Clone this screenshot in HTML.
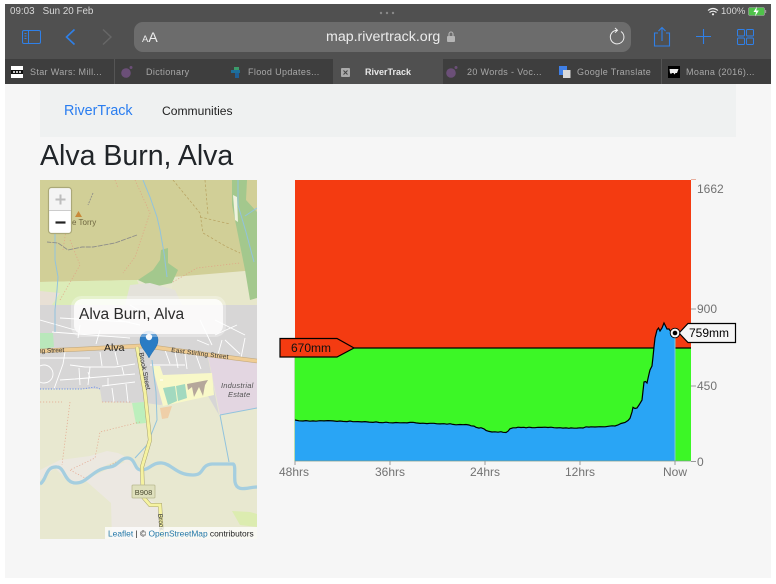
<!DOCTYPE html>
<html><head><meta charset="utf-8"><style>
html,body{margin:0;padding:0;width:776px;height:584px;overflow:hidden;background:#fff;font-family:"Liberation Sans",sans-serif}
.a{position:absolute;white-space:nowrap}
.tab{font-size:9px;color:#a8a8a8;letter-spacing:.35px;top:67px;line-height:11px}
</style></head><body>
<div class="a" style="left:5px;top:84px;width:766px;height:494px;background:#f6f6f6"></div>
<div class="a" style="left:5px;top:4px;width:766px;height:55px;background:#505050"></div>
<div class="a" style="left:5px;top:59px;width:766px;height:25px;background:#3e3e3e"></div>
<div class="a" style="left:333px;top:59px;width:110px;height:25px;background:#505050"></div>
<div class="a" style="left:114px;top:59px;width:1px;height:25px;background:#555"></div>
<div class="a" style="left:661px;top:59px;width:1px;height:25px;background:#555"></div>
<div class="a" style="left:10px;top:6px;font-size:9.8px;line-height:12px;color:#d8d8d8">09:03&nbsp;&nbsp;&nbsp;Sun 20 Feb</div>
<div class="a" style="left:721px;top:6px;font-size:9.5px;line-height:12px;color:#d8d8d8">100%</div>
<div class="a" style="left:134px;top:22px;width:497px;height:30px;border-radius:9px;background:#6c6c6c"></div>
<div class="a" style="left:142px;top:29px;font-size:14px;line-height:17px;color:#eee"><span style="font-size:9.500px">A</span>A</div>
<div class="a" style="left:326px;top:28px;font-size:14.200px;line-height:18px;color:#ececec">map.rivertrack.org</div>
<div class="a tab" style="left:30px">Star Wars: Mill...</div>
<div class="a tab" style="left:146px">Dictionary</div>
<div class="a tab" style="left:248px">Flood Updates...</div>
<div class="a tab" style="left:365px;color:#e8e8e8;font-weight:bold;letter-spacing:0">RiverTrack</div>
<div class="a tab" style="left:467px">20 Words - Voc...</div>
<div class="a tab" style="left:577px">Google Translate</div>
<div class="a tab" style="left:686px">Moana (2016)...</div>

<div class="a" style="left:40px;top:84px;width:696px;height:53px;background:#eff1f1"></div>
<div class="a" style="left:64px;top:102px;font-size:14.300px;line-height:18px;color:#2a7df0">RiverTrack</div>
<div class="a" style="left:162px;top:103px;font-size:12.100px;line-height:16px;color:#222">Communities</div>
<div class="a" style="left:40px;top:139px;font-size:28.500px;line-height:34px;color:#212529">Alva Burn, Alva</div>

<svg class="a" style="left:0;top:0" width="776" height="584" viewBox="0 0 776 584">
<defs><clipPath id="m"><rect x="40" y="180" width="217" height="359"/></clipPath></defs>
<!-- browser icons -->
<g fill="none" stroke="#2f80e8" stroke-width="1">
<rect x="22.500" y="30.500" width="18" height="13" rx="1.500"/><path d="M28.500 30.500v13M24.500 33.500h2M24.500 36h2M24.500 38.500h2"/>
<path d="M74.500 29.500l-8 7.500 8 7.500" stroke-width="1.600"/>
<path d="M658 33h-3.500v13h15V33H666M662 41V27.500M658.500 31L662 27.500l3.500 3.500" stroke-width="1.100"/>
<path d="M696 36.500h15M703.500 29v15" stroke-width="1.100"/>
<rect x="737.500" y="29.500" width="7" height="6.500" rx="1"/><rect x="746.500" y="29.500" width="7" height="6.500" rx="1"/><rect x="737.500" y="38" width="7" height="6.500" rx="1"/><rect x="746.500" y="38" width="7" height="6.500" rx="1"/>
</g>
<path d="M103 29.500l8 7.500-8 7.500" fill="none" stroke="#676767" stroke-width="1.400"/>
<path d="M621 31.500a6.800 6.800 0 1 1-4-1.200M615 28l2.500 2.300-2.500 2.400" fill="none" stroke="#eee" stroke-width="1"/>
<rect x="447" y="36" width="8" height="6" rx="1" fill="#b5b5b5"/><path d="M449 36v-2a2 2 0 0 1 4 0v2" fill="none" stroke="#b5b5b5" stroke-width="1.100"/>
<circle cx="381" cy="13" r="1.200" fill="#888"/><circle cx="387" cy="13" r="1.200" fill="#888"/><circle cx="393" cy="13" r="1.200" fill="#888"/>
<path d="M708 10.500q5-4 10 0M709.500 12.500q3.500-2.600 7 0" fill="none" stroke="#eee" stroke-width="1.100"/><circle cx="713" cy="14.300" r="1.100" fill="#eee"/>
<rect x="748.500" y="7.500" width="16" height="8" rx="1.500" fill="#4fc24a" stroke="#aaa" stroke-width=".6"/><rect x="765" y="10" width="1.200" height="3" fill="#999"/><path d="M757 6.500l-3.500 5.500h2.500l-1 4.500 3.800-6h-2.500z" fill="#fff"/>
<!-- favicons -->
<rect x="11" y="66" width="12" height="12" fill="#fff"/><rect x="11" y="70" width="12" height="4" fill="#111"/><path d="M13 71.300h2v1.500h-2zM16 71.300h2v1.500h-2zM19 71.300h2v1.500h-2z" fill="#fff"/>
<circle cx="126" cy="73" r="4.800" fill="#6b4f78"/><circle cx="131" cy="67.500" r="1.500" fill="#6b4f78"/>
<circle cx="451" cy="73" r="4.800" fill="#6b4f78"/><circle cx="456" cy="67.500" r="1.500" fill="#6b4f78"/>
<rect x="234" y="67" width="5" height="5" fill="#3b9a6a"/><rect x="231" y="70" width="9" height="3" fill="#1e6f9a"/><rect x="235" y="73" width="4" height="5" fill="#1f5f96"/>
<rect x="341" y="68" width="9" height="9" rx="1" fill="#aaa"/><path d="M343.500 70.500l4 4M347.500 70.500l-4 4" stroke="#444" stroke-width="1"/>
<rect x="559" y="66" width="8" height="9" fill="#3f7fe6"/><rect x="563" y="70" width="7.500" height="8" fill="#d8d8d8"/>
<rect x="668" y="66" width="12" height="12" fill="#000"/><path d="M669.500 69h9l-1.500 4h-1.500l-1 1.500-1-1.500h-1.500l-1 1-1-1z" fill="#eee"/>

<!-- map -->
<g clip-path="url(#m)">
<rect x="40" y="180" width="217" height="359" fill="#e8e8d0"/>
<path d="M40 180H257V273L247 273 173 277 137 280 40 282Z" fill="#d1cf97"/>
<path d="M40 282L137 280 145 300 140 305H40Z" fill="#dcecb8"/>
<path d="M40 291L60 293 52 305H40Z" fill="#e8e0d5"/>
<path d="M173 277L257 270V310H170Z" fill="#e7e7cb"/>
<path d="M232 180L247 180 246 200 257 212V298L250 300 245 270 238 235 232 205Z" fill="#a3c88d"/>
<path d="M233 195L237 197 238 222 235 220Z" fill="#eef2dd"/>
<path d="M161 250L168 248 168 263 178 270 172 283 153 287 138 280 153 270 160 260Z" fill="#a3c88d"/>
<path d="M130 285L150 283 175 290 182 305H125Z" fill="#e4e2da"/>
<path d="M40 305H257V361L208 358 219 415 208 396 160 405 146 403 102 402 100 389H40Z" fill="#d7d6d6"/>
<path d="M40 333L53 333 54 347 40 350Z" fill="#b9e8bb"/>
<path d="M208 356L257 361V408L220 415Z" fill="#e3d6e1"/>
<path d="M152 366L160 366 163 375 212 373 214 395 163 406Z" fill="#f8f8c8"/>
<path d="M163 388L175 386 177 401 168 405Z" fill="#a2d9bf"/><path d="M176 386L185 384 187 398 178 401Z" fill="#a2d9bf"/>
<path d="M187 384L208 380 205 385 203 396 199 387 194 397 192 387 188 390Z" fill="#b5a79b"/>
<path d="M132 403L144 402 146 423 136 424Z" fill="#bcefbc"/>
<path d="M160 408L172 406 168 418 162 419Z" fill="#efcfa8"/>
<path d="M107 451L118 453 130 459 138 470 120 459 100 468 85 479 72 485 55 468 40 480V470L60 460 90 456Z" fill="#ece8e0"/>
<path d="M143 470L143 497 160 505 162 539H112L111 503 85 480 110 468 125 462 138 470Z" fill="#ece8e2"/>
<path d="M232 511L250 512 257 514V527L240 525Z" fill="#dcecb0"/>
<!-- streets -->
<g fill="none" stroke="#fff" stroke-width=".9">
<path d="M40 358H90M65 352l-2 12-9 25M70 365l15 2 30 0 20-3M75 379L135 374M79 368l1 17M90 367l-2 18M100 352l2 14M115 352l3 13M108 378l0 8M60 380L90 378 88 372M122 367l2 8"/>
<path d="M102 386L135 382M112 388l2 14M126 384l2 18"/>
<path d="M165 350l5 14M175 352l3 16M185 354l2 15M196 355l5 14M150 365H185M160 380l3 0"/>
<path d="M215 320L245 335M215 335l22-10M225 340l15 14M245 338l-4 20M217 358l5-18M200 320l12 25M197 340l12 5"/>
<path d="M52 332L130 338M60 318L130 322M80 325l-2 13M100 330l-4 14M40 320L75 330M118 320l22 5M130 305l25 15"/>
</g>
<circle cx="44" cy="374" r="9" fill="none" stroke="#fff" stroke-width=".9"/>
<path d="M40 389H82L95 387 100 389" fill="none" stroke="#6a8ee8" stroke-width=".9" stroke-dasharray="1.200 1.500"/>
<!-- footpaths -->
<g fill="none" stroke="#e39a80" stroke-width=".7" stroke-dasharray="1.200 1.800" opacity=".85">
<path d="M135 180L150 213 135 257 123 273M173 282L197 268 240 263M60 300L80 265 70 240M63 250L72 190M70 402L62 465M102 402h30M140 422L100 432 95 458 70 470M40 402H62M70 470L85 478 120 460M115 180l3 8"/>
</g>
<g fill="none" stroke="#b7a05e" stroke-width=".7" stroke-dasharray="2.500 2"><path d="M173 180L200 213 203 233 227 247 240 253M200 217L230 224M205 180L208 215"/></g>
<!-- streams -->
<g fill="none" stroke="#92c3dd" stroke-width="1">
<path d="M143 180L150 197 157 217 160 230 164 253 167 277"/>
<path d="M55 233V260L58 277 57 290 55 310V332"/>
<path d="M238 180L238 205 246 232 254 262M257 208L245 216"/>
<path d="M152 360L156 392 157 420 147 445 135 458"/>
<path d="M220 415L257 408M220 415L229 462"/>
</g>
<path d="M40 484C47 480 45 466 57 467 65 467 64 483 76 483 88 483 92 469 110 467 118 466 120 458 127 458 136 458 134 470 141 470 150 470 152 462 162 463 172 464 176 475 193 475 205 475 200 465 212 464H233C236 465 234 474 235 482 237 493 248 487 257 487" fill="none" stroke="#a5cedf" stroke-width="3.300"/>
<!-- roads -->
<path d="M40 351L83 349 140 346 153 347 210 355 257 361" fill="none" stroke="#c4ab80" stroke-width="4.500"/>
<path d="M40 351L83 349 140 346 153 347 210 355 257 361" fill="none" stroke="#f0cd94" stroke-width="3.300"/>
<path d="M137 347L145 393 150 440 142 467 143 497 150 505 160 505 162 539" fill="none" stroke="#a5a070" stroke-width="4"/>
<path d="M137 347L145 393 150 440 142 467 143 497 150 505 160 505 162 539" fill="none" stroke="#f5f2a0" stroke-width="3"/>
<rect x="132" y="485" width="23" height="13" fill="#dfe0bd" stroke="#b8b88f" stroke-width=".8" rx="1"/>
<text x="143.500" y="495" font-size="7.500" text-anchor="middle" fill="#4a4a30" font-family="Liberation Sans">B908</text>
<text x="104" y="351" font-size="10.500" fill="#222" font-family="Liberation Sans">Alva</text>
<text x="171" y="352" font-size="6.500" fill="#333" font-family="Liberation Sans" transform="rotate(7 171 352)" letter-spacing=".2">East Stirling Street</text>
<text x="38" y="353" font-size="6.500" fill="#333" font-family="Liberation Sans" transform="rotate(-2 38 353)">ng Street</text>
<text x="221" y="388" font-size="7.500" fill="#555" font-family="Liberation Sans" font-style="italic" letter-spacing=".2">Industrial</text>
<text x="228" y="397" font-size="7.500" fill="#555" font-family="Liberation Sans" font-style="italic" letter-spacing=".2">Estate</text>
<text x="0" y="0" font-size="6.800" fill="#333" font-family="Liberation Sans" transform="translate(139 353) rotate(79)">Brook Street</text>
<text x="0" y="0" font-size="6.500" fill="#333" font-family="Liberation Sans" transform="translate(158 514) rotate(84)">Brook</text>
<text x="72" y="225" font-size="8" fill="#6e6640" font-family="Liberation Sans">e Torry</text>
<path d="M75 217l3.500-6 3.500 6z" fill="#c98a3a"/>
<path d="M137 235L115 243 93 247 82 247 68 250 58 243 47 242" fill="none" stroke="#8f8f8a" stroke-width=".9" stroke-dasharray="5 1"/>
<path d="M93 193L88 205" fill="none" stroke="#8f8f8a" stroke-width=".9" stroke-dasharray="2 1"/>
</g>
<!-- marker -->
<path d="M149 358C145 350 140 347 140 340a9 9 0 0 1 18 0C158 347 153 350 149 358Z" fill="#2a7cc4" stroke="#1f6bab" stroke-width=".5"/>
<circle cx="149" cy="337" r="3.200" fill="#fff" opacity=".95"/>
<!-- popup -->
<rect x="72.500" y="297.500" width="152" height="38" rx="9" fill="none" stroke="#fff" stroke-opacity=".3" stroke-width="3"/>
<rect x="74" y="299" width="149" height="35" rx="8" fill="#fff" fill-opacity=".86"/>
<text x="79" y="319" font-size="15.500" fill="#2b2b2b" font-family="Liberation Sans">Alva Burn, Alva</text>
<!-- zoom control -->
<rect x="48.500" y="187.500" width="23" height="46" rx="3" fill="#fff" stroke="#aaa878" stroke-width="1.200"/>
<rect x="49.500" y="188.500" width="21" height="22" rx="2" fill="#f4f4f4"/>
<path d="M49 210.500h22" stroke="#ccc"/>
<path d="M55.500 199.500h10M60.500 194.500v10" stroke="#bdbdbd" stroke-width="2"/>
<path d="M55.500 222.500h10" stroke="#222" stroke-width="2.200"/>
<rect x="105" y="527" width="152" height="12" fill="#fff" fill-opacity=".75"/>
<text x="108" y="536.500" font-size="8.400" fill="#222" font-family="Liberation Sans"><tspan fill="#2378a8">Leaflet</tspan> | © <tspan fill="#2378a8">OpenStreetMap</tspan> contributors</text>

<!-- chart -->
<rect x="295" y="180" width="396" height="168" fill="#f43b11"/>
<rect x="295" y="348" width="396" height="113" fill="#3cf726"/>
<path d="M354 348H691" stroke="#000" stroke-width="1.300"/>
<path d="M295 420L299 420.800 303 421 306 420.600 310 421.200 313 420.900 316 421.200 320 420.700 324 420.900 328 420.600 333 420.900 337 421.400 340 421 343 421.400 347 421.600 350 421 353 421.700 358 421.600 362 421.900 365 421.600 369 422.100 373 422.400 376 421.900 379 422.500 383 422.700 386 422.200 389 422.700 393 422.900 396 422.500 400 422.800 404 422.700 407 422.900 410 422.400 413 422.300 416 422.900 420 423.400 423 423.200 427 423.600 430 423.300 434 423.300 437 423.800 440 423.900 444 423.700 447 424.200 450 423.700 453 424.400 456 424.800 460 424.500 463 424.700 466 424.500 469 425 471 425.800 474 426.100 476 427.300 479 428.100 481 427.700 484 428.900 486 430.400 489 431.400 492 432 495 431.800 498 432.200 501 431.700 503 432.300 506 432.500 508 431.200 510 428.800 513 427.800 516 427.800 518 427.200 521 427.500 524 427.300 526 427.800 529 427.200 532 427.600 535 427.700 538 427.300 542 427.400 545 427.200 548 427.500 551 427.200 554 427.700 557 427.900 560 427.700 563 428.100 566 427.900 569 428.300 571 427.900 574 428.200 577 428.100 580 427.800 583 428 586 426.800 589 427.100 591 426.800 595 427 600 426.700 605 426.800 609 426.200 612 425.800 615 426 618 425 621 423.500 625 422.500 628 420.500 630 418.300 632 412 633 407.300 635 408.500 637 408 639 405 642 400 643 391 644 382 645.500 381.500 647 383 649 374 650 370 652 366 653 357 654 347 655 338 657 330 658.500 328 660 331 662 328 664 323 665.500 326 667 329 669 329 671 332 673 334 674.500 335V461H295Z" fill="#29a5f5"/>
<path d="M295 420L299 420.800 303 421 306 420.600 310 421.200 313 420.900 316 421.200 320 420.700 324 420.900 328 420.600 333 420.900 337 421.400 340 421 343 421.400 347 421.600 350 421 353 421.700 358 421.600 362 421.900 365 421.600 369 422.100 373 422.400 376 421.900 379 422.500 383 422.700 386 422.200 389 422.700 393 422.900 396 422.500 400 422.800 404 422.700 407 422.900 410 422.400 413 422.300 416 422.900 420 423.400 423 423.200 427 423.600 430 423.300 434 423.300 437 423.800 440 423.900 444 423.700 447 424.200 450 423.700 453 424.400 456 424.800 460 424.500 463 424.700 466 424.500 469 425 471 425.800 474 426.100 476 427.300 479 428.100 481 427.700 484 428.900 486 430.400 489 431.400 492 432 495 431.800 498 432.200 501 431.700 503 432.300 506 432.500 508 431.200 510 428.800 513 427.800 516 427.800 518 427.200 521 427.500 524 427.300 526 427.800 529 427.200 532 427.600 535 427.700 538 427.300 542 427.400 545 427.200 548 427.500 551 427.200 554 427.700 557 427.900 560 427.700 563 428.100 566 427.900 569 428.300 571 427.900 574 428.200 577 428.100 580 427.800 583 428 586 426.800 589 427.100 591 426.800 595 427 600 426.700 605 426.800 609 426.200 612 425.800 615 426 618 425 621 423.500 625 422.500 628 420.500 630 418.300 632 412 633 407.300 635 408.500 637 408 639 405 642 400 643 391 644 382 645.500 381.500 647 383 649 374 650 370 652 366 653 357 654 347 655 338 657 330 658.500 328 660 331 662 328 664 323 665.500 326 667 329 669 329 671 332 673 334 674.500 335" fill="none" stroke="#000" stroke-width="1.200"/>
<path d="M675 336V461" stroke="#7fc8d8" stroke-width="1"/>
<path d="M294.500 348V461" stroke="#b8dcb0" stroke-width="1"/>
<path d="M295 461H691" stroke="#7f9a88" stroke-width=".8"/>
<!-- axes -->
<g stroke="#999" stroke-width="1"><path d="M691 309h5M691 386h5M691 461.500h5M295 461v4M390 461v4M485 461v4M580 461v4M675 461v4"/><path d="M691 179.500h5" stroke="#e8b0a0"/></g>
<g font-family="Liberation Sans" font-size="12" fill="#727272">
<text x="697" y="193">1662</text><text x="697" y="313">900</text><text x="697" y="390">450</text><text x="697" y="466">0</text>
<text x="294" y="476" text-anchor="middle">48hrs</text><text x="390" y="476" text-anchor="middle">36hrs</text><text x="485" y="476" text-anchor="middle">24hrs</text><text x="580" y="476" text-anchor="middle">12hrs</text><text x="675" y="476" text-anchor="middle">Now</text>
</g>
<!-- labels -->
<path d="M280 338.500H337L354 348 337 357H280Z" fill="#f43b11" stroke="#000" stroke-width="1.200"/>
<text x="291" y="352" font-family="Liberation Sans" font-size="12" fill="#111">670mm</text>
<path d="M679 333L688 323.500H735.500V342.500H688Z" fill="#f6f6f6" stroke="#000" stroke-width="1.200"/>
<text x="689" y="337" font-family="Liberation Sans" font-size="12" fill="#000">759mm</text>
<circle cx="675" cy="333" r="4.800" fill="#f6f6f6" stroke="#000" stroke-width=".9"/>
<circle cx="675" cy="333" r="2.300" fill="#000"/>
</svg>
</body></html>
